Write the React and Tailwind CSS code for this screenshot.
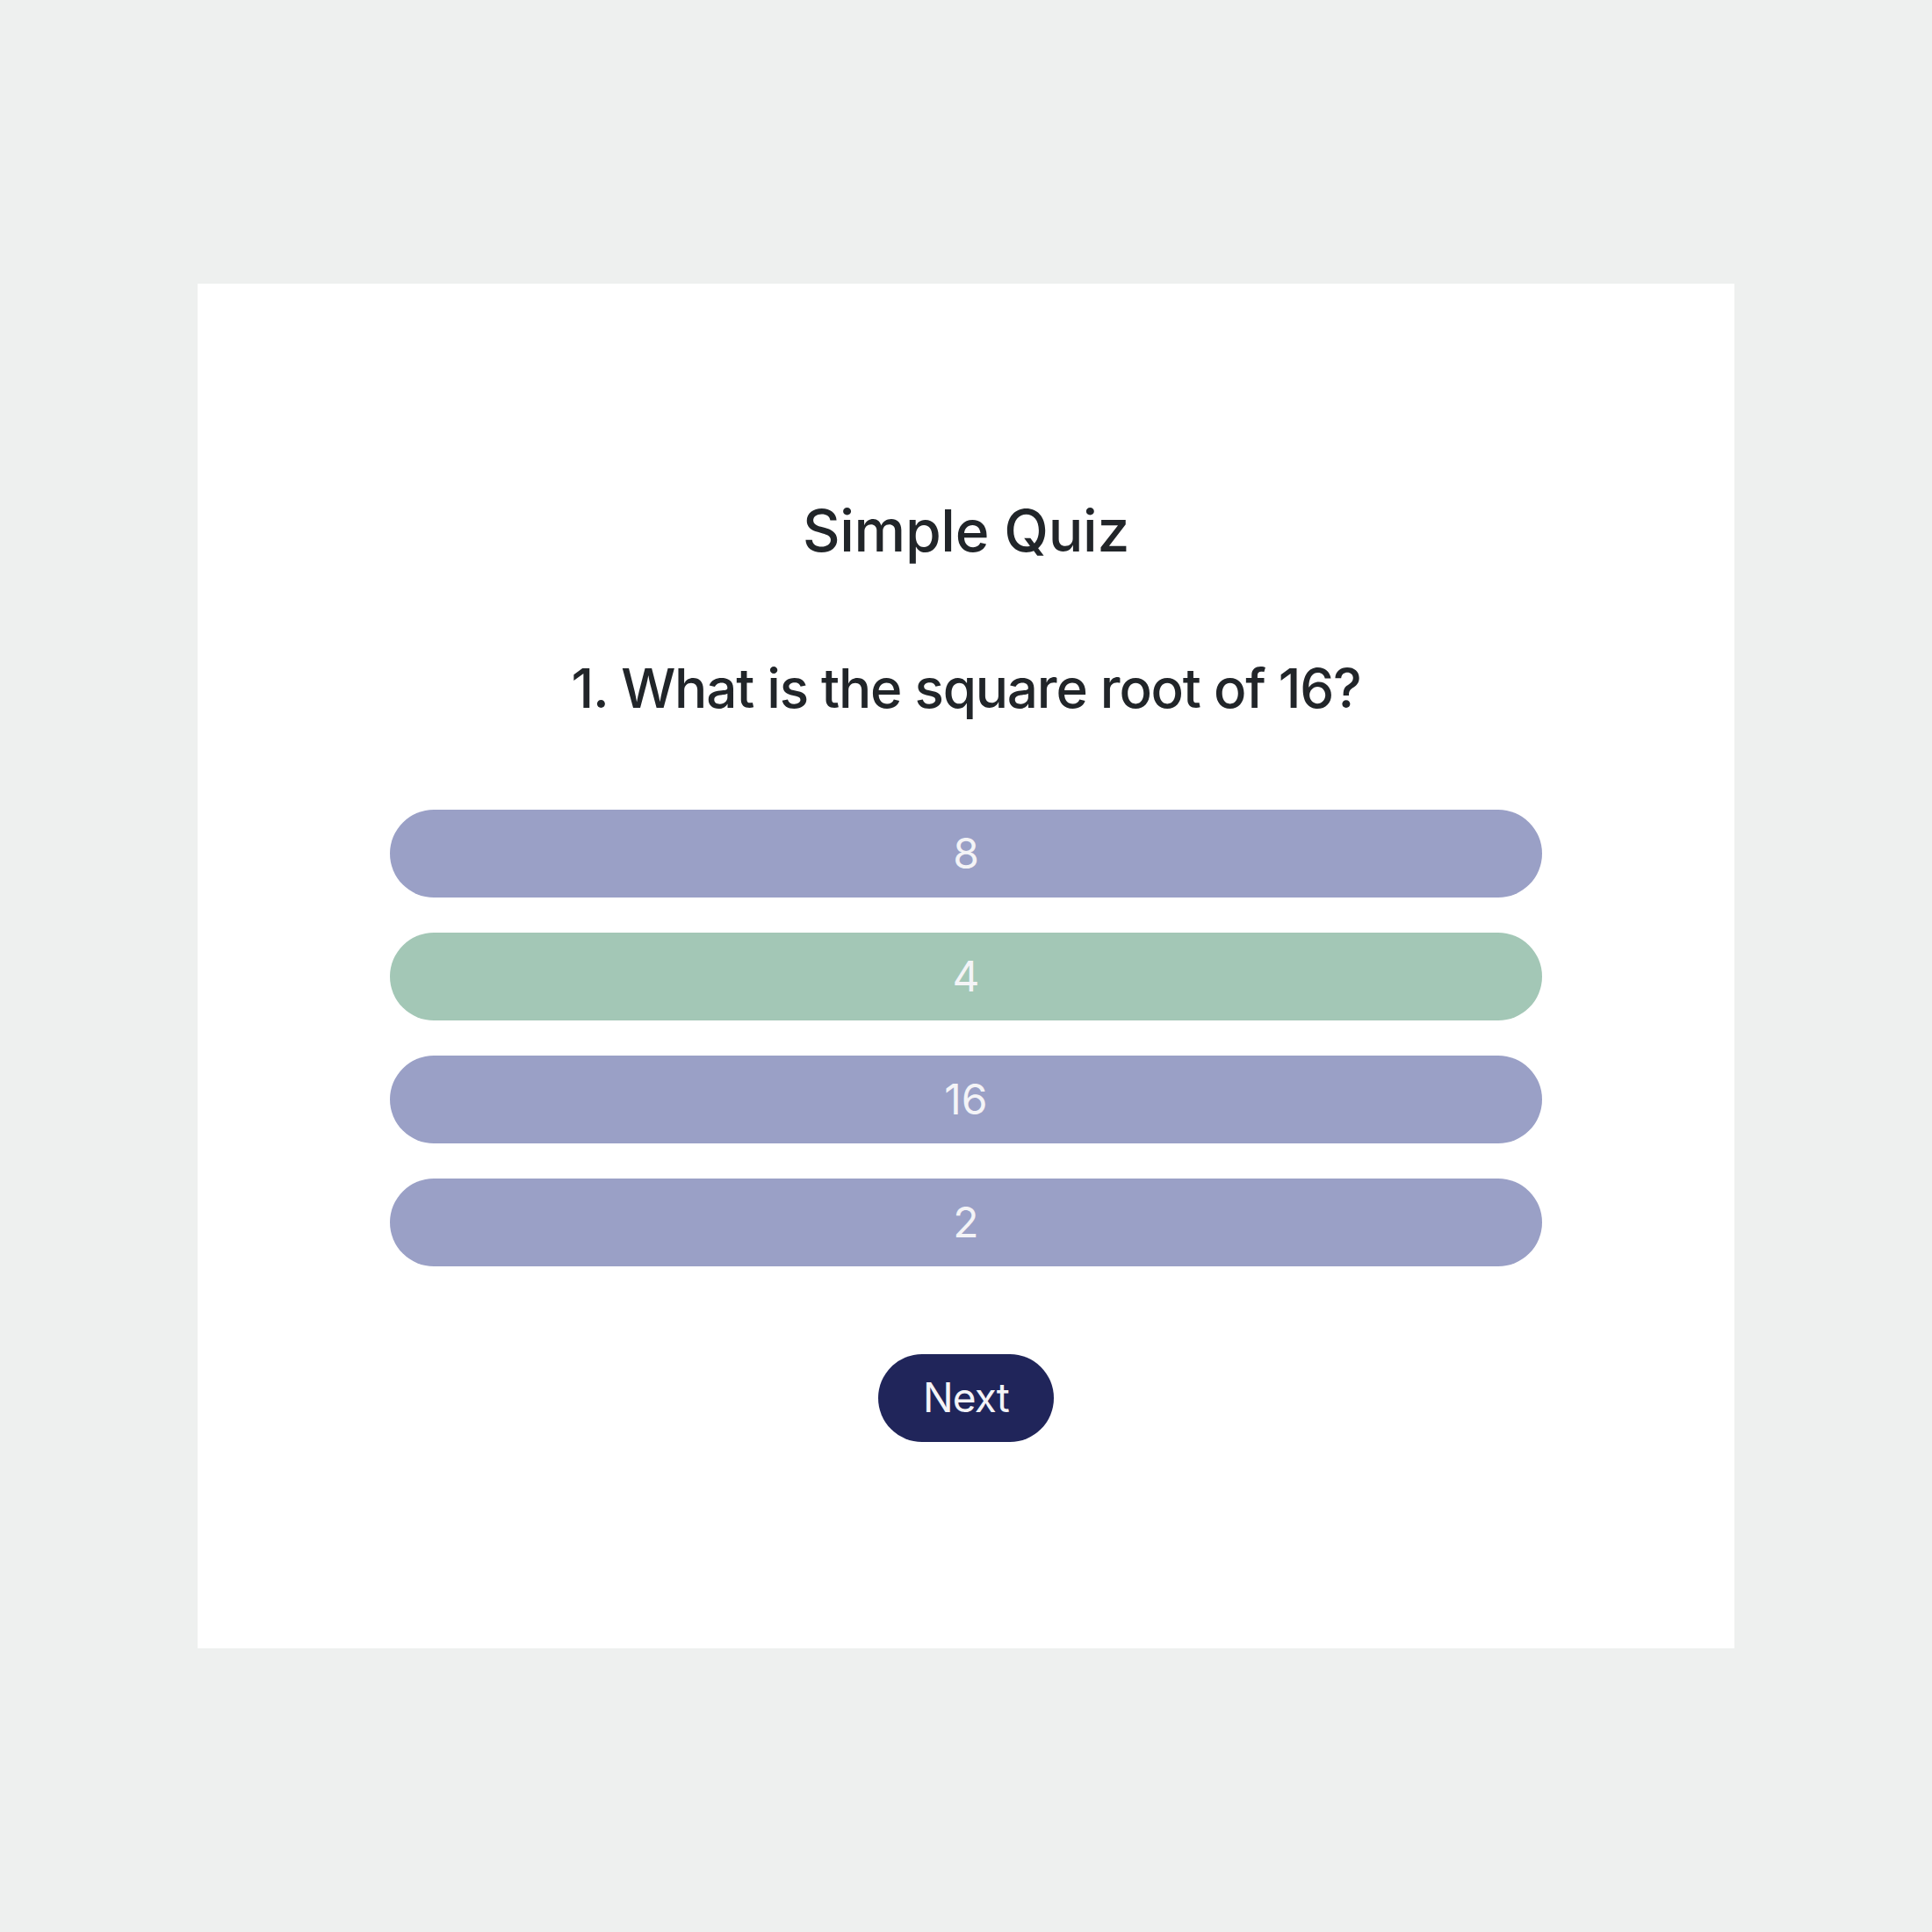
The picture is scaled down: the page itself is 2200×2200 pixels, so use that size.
import { useState } from 'react';

const answers = [
  { text: '8', correct: false },
  { text: '4', correct: true },
  { text: '16', correct: false },
  { text: '2', correct: false },
];

export default function App() {
  const [picked, setPicked] = useState(1);

  return (
    <div className="min-h-screen bg-[#eef0ef] flex items-center justify-center font-['Inter',sans-serif]">
      <div className="w-[1750px] bg-white flex flex-col items-center pt-[241px] pb-[235px]">
        <h1 className="text-[66px] leading-[80px] font-medium tracking-[-0.005em] text-[#212529]">Simple Quiz</h1>

        <h2 className="mt-[102px] text-[62px] leading-[1.21] font-medium tracking-[-0.02em] text-[#212529]">
          1. What is the square root of 16?
        </h2>

        <div className="mt-[100px] w-3/4 flex flex-col gap-[40px]">
          {answers.map((a, i) => (
            <button
              key={a.text}
              onClick={() => setPicked(i)}
              className={`h-[100px] rounded-full text-[48px] text-[#f4f4f7] flex items-center justify-center ${
                picked === i && a.correct ? 'bg-[#a3c7b6]' : 'bg-[#9aa0c6]'
              }`}
            >
              {a.text}
            </button>
          ))}
        </div>

        <button className="mt-[100px] w-[200px] h-[100px] rounded-full bg-[#20255a] text-[46px] font-normal tracking-[-0.02em] text-[#f4f4f7] flex items-center justify-center">
          Next
        </button>
      </div>
    </div>
  );
}
